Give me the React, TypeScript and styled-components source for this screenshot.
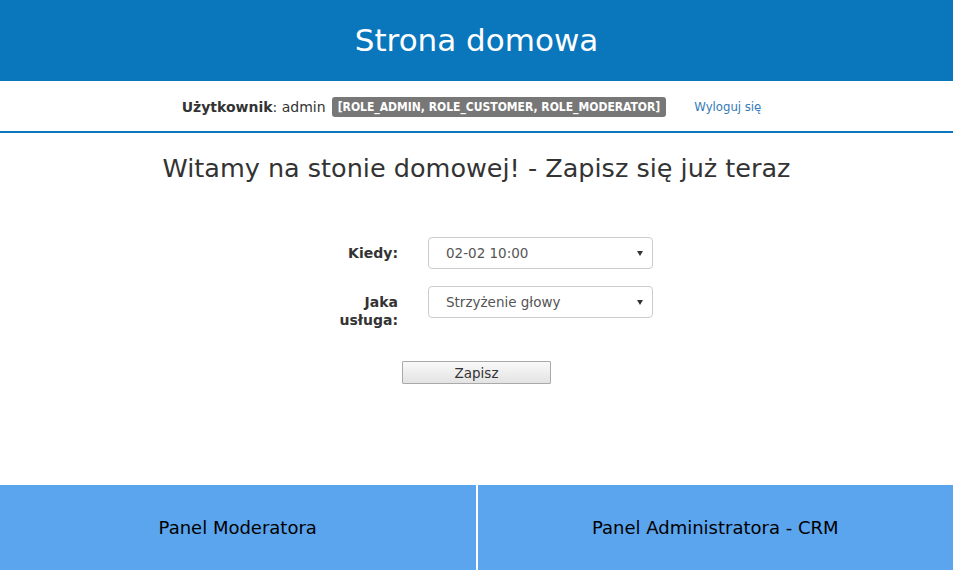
import React from "react";
import styled, { createGlobalStyle } from "styled-components";

const Global = createGlobalStyle`
  html, body { margin: 0; padding: 0; background: #fff; }
  body { font-family: "DejaVu Sans", Verdana, sans-serif; color: #333; }
`;

const Page = styled.div`
  display: flex;
  flex-direction: column;
  width: 100%;
`;

const Header = styled.header`
  height: 81px;
  background: #0a77bd;
  display: flex;
  align-items: center;
  justify-content: center;
`;

const Title = styled.h1`
  margin: 0;
  font-weight: normal;
  font-size: 31px;
  color: #fff;
  line-height: 1;
`;

const UserBar = styled.div`
  height: 50px;
  border-bottom: 2px solid #0a77bd;
  display: flex;
  align-items: center;
  justify-content: center;
  padding-right: 10px;
  padding-top: 1px;
  box-sizing: content-box;
  height: 49px;
  color: #333;
`;

const UserInfo = styled.span`
  display: flex;
  align-items: center;
  font-family: "DejaVu Sans", sans-serif;
  font-size: 14px;
`;

const Bold = styled.b`
  font-weight: bold;
`;

const Badge = styled.span`
  margin-left: 6px;
  background: #777;
  color: #fff;
  font-family: "DejaVu Sans Condensed", "DejaVu Sans", sans-serif;
  font-weight: bold;
  font-size: 12px;
  border-radius: 3px;
  padding: 3px 6px;
  line-height: 14px;
`;

const Logout = styled.a`
  margin-left: 28px;
  color: #337ab7;
  font-size: 13px;
  font-family: "DejaVu Sans Condensed", "DejaVu Sans", sans-serif;
  text-decoration: none;
`;

const Heading = styled.h2`
  margin: 21px 0 0;
  text-align: center;
  font-weight: normal;
  font-size: 25.5px;
  line-height: 29px;
  color: #333;
  font-family: "DejaVu Sans", sans-serif;
`;

const Form = styled.form`
  margin-top: 54px;
  display: flex;
  flex-direction: column;
  align-items: center;
`;

const Grid = styled.div`
  display: grid;
  grid-template-columns: 80px 225px;
  column-gap: 30px;
  row-gap: 17px;
  margin-left: 18px;
`;

const Label = styled.label`
  text-align: right;
  font-weight: bold;
  font-size: 14px;
  line-height: 18px;
  padding-top: 7px;
  color: #333;
`;

const SelectWrap = styled.div`
  position: relative;
  height: 32px;
  &::after {
    content: "";
    position: absolute;
    right: 10px;
    top: 14px;
    border-left: 3px solid transparent;
    border-right: 3px solid transparent;
    border-top: 5px solid #333;
    pointer-events: none;
  }
`;

const Select = styled.select`
  appearance: none;
  -webkit-appearance: none;
  width: 100%;
  height: 32px;
  box-sizing: border-box;
  border: 1px solid #ccc;
  border-radius: 4px;
  background: #fff;
  padding: 0 24px 0 17px;
  font-family: "DejaVu Sans", sans-serif;
  font-size: 13.5px;
  color: #555;
  outline: none;
`;

const Submit = styled.button`
  margin-top: 32px;
  width: 149px;
  height: 23px;
  border: 1px solid #a9a9a9;
  border-radius: 1px;
  background: linear-gradient(#f9f9f9, #e3e3e3);
  font-family: "DejaVu Sans", sans-serif;
  font-size: 13.5px;
  color: #333;
  padding: 0;
`;

const Footer = styled.div`
  margin-top: 101px;
  display: flex;
  gap: 2px;
  height: 85px;
`;

const Panel = styled.a`
  flex: 1;
  background: #5aa5ee;
  display: flex;
  align-items: center;
  justify-content: center;
  color: #000;
  text-decoration: none;
  font-family: "DejaVu Sans", sans-serif;
  font-size: 18px;
`;

export default function App() {
  return (
    <Page>
      <Global />
      <Header>
        <Title>Strona domowa</Title>
      </Header>
      <UserBar>
        <UserInfo>
          <Bold>Użytkownik</Bold>: admin
          <Badge>[ROLE_ADMIN, ROLE_CUSTOMER, ROLE_MODERATOR]</Badge>
        </UserInfo>
        <Logout href="#">Wyloguj się</Logout>
      </UserBar>
      <Heading>Witamy na stonie domowej! - Zapisz się już teraz</Heading>
      <Form onSubmit={(e) => e.preventDefault()}>
        <Grid>
          <Label>Kiedy:</Label>
          <SelectWrap>
            <Select defaultValue="1">
              <option value="1">02-02 10:00</option>
            </Select>
          </SelectWrap>
          <Label>Jaka usługa:</Label>
          <SelectWrap>
            <Select defaultValue="1">
              <option value="1">Strzyżenie głowy</option>
            </Select>
          </SelectWrap>
        </Grid>
        <Submit type="submit">Zapisz</Submit>
      </Form>
      <Footer>
        <Panel href="#">Panel Moderatora</Panel>
        <Panel href="#">Panel Administratora - CRM</Panel>
      </Footer>
    </Page>
  );
}
